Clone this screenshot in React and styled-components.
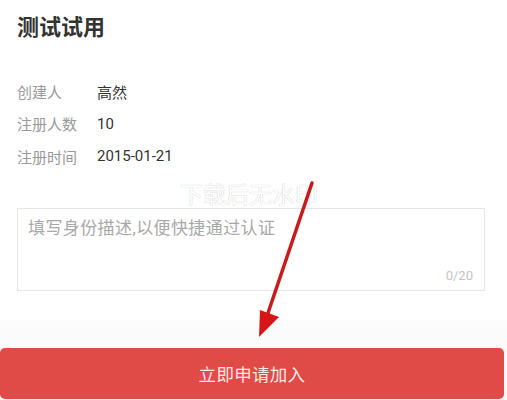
import React from "react";
import styled, { createGlobalStyle } from "styled-components";

const Global = createGlobalStyle`
  html, body { margin: 0; padding: 0; background: #fff; }
  body { font-family: Roboto, "Noto Sans CJK SC", sans-serif; }
`;

const Page = styled.div`
  position: relative;
  width: 507px;
  height: 400px;
  overflow: hidden;
  display: flex;
  flex-direction: column;
`;

const Content = styled.div`
  padding: 13px 22px 0 17px;
  flex: 1;
`;

const Title = styled.h1`
  margin: 0;
  font-size: 22px;
  line-height: 30px;
  font-weight: 700;
  color: #333;
`;

const Info = styled.div`
  margin-top: 32px;
  display: flex;
  flex-direction: column;
`;

const Row = styled.div`
  display: grid;
  grid-template-columns: 80px 1fr;
  height: 32.5px;
  align-items: center;
  font-size: 15px;
`;

const Label = styled.span`
  color: #9a9a9a;
`;

const Value = styled.span`
  color: #333;
`;

const Box = styled.div`
  position: relative;
  margin-top: 35px;
  border: 1px solid #e6e6e6;
  padding: 8px 10px;
  box-sizing: border-box;
  height: 83px;
`;

const Placeholder = styled.div`
  font-size: 17px;
  line-height: 22px;
  letter-spacing: 0.4px;
  color: #a8a8a8;
`;

const Counter = styled.span`
  position: absolute;
  right: 11px;
  bottom: 7px;
  font-size: 13px;
  color: #c4c4c4;
`;

const Footer = styled.div`
  background: linear-gradient(#fcfcfc, #f8f8f8);
  padding: 28px 3px 1px 0;
`;

const Button = styled.button`
  display: block;
  width: 100%;
  height: 51px;
  border: none;
  border-radius: 5px;
  background: #e04b48;
  color: #fde9e8;
  font-family: "Noto Sans CJK SC", sans-serif;
  font-size: 17.5px;
  letter-spacing: 0.3px;
`;

const Watermark = styled.div`
  position: absolute;
  left: 180px;
  top: 180px;
  font-family: "Noto Sans CJK SC", sans-serif;
  font-size: 23px;
  line-height: 26px;
  color: #fff;
  text-shadow: 0 0 1px rgba(0, 0, 0, 0.3);
  pointer-events: none;
`;

const Overlay = styled.svg`
  position: absolute;
  left: 0;
  top: 0;
  pointer-events: none;
`;

const rows = [
  ["创建人", "高然"],
  ["注册人数", "10"],
  ["注册时间", "2015-01-21"],
];

export default function App() {
  return (
    <Page>
      <Global />
      <Content>
        <Title>测试试用</Title>
        <Info>
          {rows.map(([l, v]) => (
            <Row key={l}>
              <Label>{l}</Label>
              <Value>{v}</Value>
            </Row>
          ))}
        </Info>
        <Box>
          <Placeholder>填写身份描述,以便快捷通过认证</Placeholder>
          <Counter>0/20</Counter>
        </Box>
      </Content>
      <Footer>
        <Button>立即申请加入</Button>
      </Footer>
      <Watermark>下载后无水印</Watermark>
      <Overlay width="507" height="400" viewBox="0 0 507 400">
        <line x1="312" y1="183" x2="268" y2="313" stroke="#c81c1c" strokeWidth="3.5" strokeLinecap="round" />
        <polygon points="259,337 260,310 279,317" fill="#d81515" />
      </Overlay>
    </Page>
  );
}
